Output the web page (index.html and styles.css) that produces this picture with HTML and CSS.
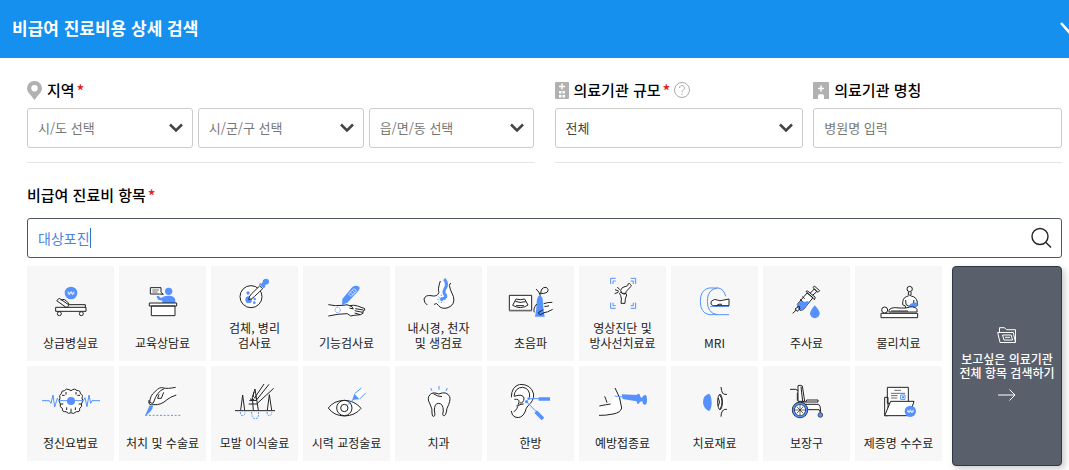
FILE: index.html
```html
<!DOCTYPE html>
<html lang="ko">
<head>
<meta charset="utf-8">
<meta name="viewport" content="width=device-width, initial-scale=1">
<title>비급여 진료비용 상세 검색</title>
<link rel="stylesheet" href="styles.css">
</head>
<body>
<header class="top">
  <h1 class="top-title">비급여 진료비용 상세 검색</h1>
  <button class="top-toggle" type="button" aria-label="접기">
    <svg width="20" height="14" viewBox="0 0 20 14"><path d="M2 2l8 9 8-9" fill="none" stroke="#fff" stroke-width="2.500"/></svg>
  </button>
</header>
<main class="content">
  <form class="filters">
    <section class="group">
      <div class="field">
        <div class="label-row">
          <svg width="15" height="19" viewBox="0 0 15 19"><path fill="#b1b1b1" fill-rule="evenodd" d="M7.500 0A7.300 7.300 0 0 0 0 7.300C0 11 3 13 7.500 19C12 13 15 11 15 7.300A7.300 7.300 0 0 0 7.500 0ZM7.500 4a3.200 3.200 0 1 1 0 6.400a3.200 3.200 0 0 1 0-6.400Z"/></svg>
          <label class="label" for="sido">지역</label><span class="star">*</span>
        </div>
        <div class="selects">
          <div class="select-box"><select id="sido" class="control muted"><option>시/도 선택</option></select><svg class="arrow" width="14" height="10" viewBox="0 0 14 10"><path d="M1 1.500l6 6 6-6"/></svg></div>
          <div class="select-box"><select class="control muted" aria-label="시/군/구"><option>시/군/구 선택</option></select><svg class="arrow" width="14" height="10" viewBox="0 0 14 10"><path d="M1 1.500l6 6 6-6"/></svg></div>
          <div class="select-box"><select class="control muted" aria-label="읍/면/동"><option>읍/면/동 선택</option></select><svg class="arrow" width="14" height="10" viewBox="0 0 14 10"><path d="M1 1.500l6 6 6-6"/></svg></div>
        </div>
      </div>
    </section>
    <section class="group group-wide">
      <div class="field">
        <div class="label-row">
          <svg width="14" height="17" viewBox="0 0 14 17"><rect width="14" height="17" rx="1" fill="#b1b1b1"/><path d="M7 1.500v6M4 4.500h6" stroke="#fff" stroke-width="1.500"/><path fill="#fff" d="M4 9h2.500v2.500H4zM7.500 9H10v2.500H7.500zM4 13h2.500v2.500H4zM7.500 13H10v2.500H7.500z"/></svg>
          <label class="label" for="size">의료기관 규모</label><span class="star">*</span>
          <button class="help" type="button" aria-label="도움말"><svg width="16" height="16" viewBox="0 0 16 16" fill="none" stroke="#aaa"><circle cx="8" cy="8" r="7.500"/><path d="M5.500 6a2.500 2.500 0 1 1 4.200 1.800C8.500 8.700 8 9 8 10.300M8 11.500v1.300"/></svg></button>
        </div>
        <div class="select-box"><select id="size" class="control"><option>전체</option></select><svg class="arrow" width="14" height="10" viewBox="0 0 14 10"><path d="M1 1.500l6 6 6-6"/></svg></div>
      </div>
      <div class="field">
        <div class="label-row">
          <svg width="16" height="17" viewBox="0 0 16 17"><path fill="#b1b1b1" d="M0 1a1 1 0 0 1 1-1h14a1 1 0 0 1 1 1v16h-5v-3q0-2-3-2t-3 2v3H0z"/><path d="M8 3.500v6M5 6.500h6" stroke="#fff" stroke-width="1.500"/></svg>
          <label class="label" for="name">의료기관 명칭</label>
        </div>
        <input id="name" class="control" type="text" placeholder="병원명 입력">
      </div>
    </section>
  </form>
  <div class="label-row item-label"><label class="label" for="item">비급여 진료비 항목</label><span class="star">*</span></div>
  <div class="search">
    <input id="item" class="search-input" type="text" value="대상포진"><span class="caret"></span>
    <button class="search-button" type="button" aria-label="검색"><svg width="22" height="22" viewBox="0 0 22 22" fill="none" stroke="#222" stroke-width="1.400"><circle cx="10" cy="9.500" r="8"/><path d="M16 15.500l5 5"/></svg></button>
  </div>
  <div class="items">
    <div class="tiles">
      <button class="tile" type="button">
        <svg class="icon" viewBox="60 72 183 132"><circle class="b" cx="153" cy="99" r="19"/><path class="w" d="M144 94l4 11 5-11 5 11 4-11M142 99h22"/><path class="k f" d="M107 142h91v12h-91z"/><path class="k" d="M110 122l8-7 29 20-5 7h-4zM122 120q12-6 22 8l4 6h48v8"/><circle class="k f" cx="118" cy="161" r="6"/><circle class="k f" cx="184" cy="161" r="6"/></svg>
        <span>상급병실료</span>
      </button>
      <button class="tile" type="button">
        <svg class="icon" viewBox="336 72 183 132"><circle class="b" cx="446" cy="94" r="11"/><path class="b" d="M427 129v-7l-12-3q-6-7-5-10l5-2 8 7q10-8 26-7 17 1 17 15v7z"/><path class="k f" d="M391 83h32v14l7 6-12-1h-27zM388 129h82v9h-82zM394 138h71v29h-71z"/><path class="k thin" d="M397 90h20M397 96h16"/></svg>
        <span>교육상담료</span>
      </button>
      <button class="tile" type="button">
        <svg class="icon" viewBox="57 27 183 132"><circle class="k f" cx="138" cy="110" r="33"/><circle class="b" cx="131" cy="119" r="10"/><circle class="b" cx="129" cy="99" r="5"/><circle class="b" cx="149" cy="117" r="4"/><circle class="b" cx="148" cy="128" r="4"/><path class="k f" d="M131 119q2-12 9-18l24-23 9 8-25 24q-8 8-17 9z"/><path class="b" d="M162 73l5-4 4 2 3-10q7-7 15-3 6 6 1 13l-10 5 1 4-5 5z"/></svg>
        <span>검체, 병리<br>검사료</span>
      </button>
      <button class="tile" type="button">
        <svg class="icon" viewBox="333 72 183 132"><path class="f" d="M370 134l44 2 20 1 24 1 21 8v14l-28 6-25-1-57 4z"/><path class="k" d="M370 134q20 5 44 2 14-4 20 1 12-3 24 1l21 8q2 6-5 7v7l-8 4-18 2q-12 6-21-5-27 0-57 7M451 146l24 4M449 152l24 5M449 159l17 5M434 137q8 1 11 10l-12-3"/><path class="b" d="M411 137l1-20 30-36q12-7 21 0 3 5-4 13l-32 34q-8 1-16 9z"/><path class="w" d="M430 102l16-15q9 0 8 7l-16 15zM436 97l9 7M442 91l8 7"/><circle class="bl" cx="398" cy="150" r="8" stroke-dasharray="3 2"/></svg>
        <span>기능검사료</span>
      </button>
      <button class="tile" type="button">
        <svg class="icon" viewBox="54 27 183 132"><path class="f" d="M148 64l-6 30-20 15 12 30 45 4 12-25-13-42z"/><path class="k" d="M151 63q-9 27-4 34-5 15-24 10-16-3-21 10 0 12 10 18M132 133q9-6 13 3 10 13 29 7 23-9 16-34-11-22-12-33l4-7"/><path class="b5" d="M163 57q12 15 2 29-7 14 2 20 3 8-14 12"/><path class="bl" d="M146 110l16 17M163 110l-18 16M154 104v25M142 118h25" stroke-dasharray="4 3"/></svg>
        <span>내시경, 천자<br>및 생검료</span>
      </button>
      <button class="tile" type="button">
        <svg class="icon" viewBox="330 72 183 132"><path class="k f" d="M358 106h67v45h-67z"/><path d="M357 153h69" stroke="#888" stroke-width="3"/><path class="k" d="M378 117q13 4 26 0l10 18q-22 15-46 1zM376 124q13 6 31 1M378 137h24"/><path class="f" d="M456 132l31-5 1 21-36 13z"/><path class="k" d="M438 87q10 8 13 20M452 103q0-22 16-21 11 6 3 15-9 5-20 3"/><path class="b" d="M435 170q5-24 5-44 2-20 10-20 9 3 9 24 1 22 5 40z"/><path class="k" d="M440 132q-12 16-7 25M488 148q-18 10-26 10l-10 6q-8-1-6-7l14-8M487 127q-15 0-26 4M463 139q8 1 14-2"/></svg>
        <span>초음파</span>
      </button>
      <button class="tile" type="button">
        <svg class="icon" viewBox="51 27 183 132"><path class="bl" d="M122 55h-15v17M167 55h15v17M122 145h-15v-17M167 145h15v-17M114 72v-9h8M175 72v-9h-8M114 128v9h8M175 128v9h-8"/><path class="k f" d="M144 82l14-5 2-6q5-2 6 2 5 2 1 7l-13 14-3 8q-7 1-11-3l-3-8q3-8 7-9zM137 106q-7-7 0-9 4 3 9 3 9-2 9 5-6 12-5 25h-12q3-14-1-24zM120 89l12 5M119 101l11-4M127 81l7 8"/></svg>
        <span>영상진단 및<br>방사선치료료</span>
      </button>
      <button class="tile" type="button">
        <svg class="icon" viewBox="327 72 183 132"><path class="bl" d="M462 164h-60q-26-5-26-40t26-40h28q17 3 22 25"/><path class="bl" d="M462 139h-56M427 84q-30 4-30 40t30 40"/><path class="k f" d="M462 137h-46q-11-2-7-13 9-9 18-4 8 4 15 1l20-4z"/><path class="k" d="M424 137q8-7 17-4"/></svg>
        <span>MRI</span>
      </button>
      <button class="tile" type="button">
        <svg class="icon" viewBox="48 72 183 132"><path class="k f" d="M112 133l29-34 18 14-29 36-10 2q-9-7-8-18z"/><path class="b" d="M116 128l9-7q8 8 16 2l8 3-19 23-11 2q-9-7-8-18z"/><path class="k" d="M98 160l11-10M105 147l12-9 3 9-9 7zM138 94l5-1 23 19-3 7zM151 99l12-12 7 8-12 11M159 83l4-5 16 14-5 5zM127 110l7 6M120 118l7 6"/><path class="b" d="M164 136q-14 18-14 24a14 14 0 0 0 29 0q0-8-15-24z"/></svg>
        <span>주사료</span>
      </button>
      <button class="tile" type="button">
        <svg class="icon" viewBox="321 72 183 132"><path class="k f" d="M435 148l-2-10-8-4q-1-20 11-24 7-2 10-5 4 4 11 5 13 5 13 26l-8 5-7 9zM434 120l1 14 8 4M459 120l-2 12"/><path class="k" d="M442 96v9M450 96v9"/><circle class="k f" cx="446" cy="87" r="8"/><path class="b" d="M439 143q8-16 31-16v9l-11 10z"/><path class="k f" d="M360 160h110v13H360zM384 156q-2-12 17-13 23 2 34 1 25-9 33 4v8zM390 153h51"/><circle class="k f" cx="371" cy="150" r="9"/></svg>
        <span>물리치료</span>
      </button>

      <button class="tile" type="button">
        <svg class="icon" viewBox="60 66 183 132"><path class="k f" d="M147 83q-8-5-14 3-9-1-9 9-8 5-4 13-5 10 1 18-3 10 6 13-1 12 11 10 8 9 15 3 8 6 16-3 12 2 10-10 9-5 5-13 8-8 2-18 4-10-5-13 0-11-10-9-7-8-13-3"/><path class="k" d="M147 83l6 3 5-3M138 90v8M168 90v8M126 100h8M180 100h-8M122 126h8M184 126h-8M140 144v-8M166 144v-8M153 150v-10"/><circle class="b" cx="153" cy="117" r="12"/><path class="bl" d="M66 116h22l5 8 6-25 5 36 8-26 4 7h74l5-9 6 27 6-35 5 25 4-8h24"/></svg>
        <span>정신요법료</span>
      </button>
      <button class="tile" type="button">
        <svg class="icon" viewBox="336 66 183 132"><path class="f" d="M470 75l-38 2-22 1-20 22 1 26 37-8 44-19z"/><path class="k" d="M467 76q-25 5-36 2-12-5-26 11-16 12-16 35M469 99q-17 5-28 14-18 17-39 15-19 4-15-14M433 80q-22 7-33 43-7 4-10-4M431 91l-7 18h-11l4-12"/><path class="b" d="M389 130l10 2q-2 18-24 29z"/><path class="bl" d="M376 160h105" stroke-dasharray="6 5"/></svg>
        <span>처치 및 수술료</span>
      </button>
      <button class="tile" type="button">
        <svg class="icon" viewBox="57 66 183 132"><path class="k f" d="M107 145l6-46 6 46M187 145l6-47 7 47M145 145l-3-39 8-25 10 64M133 116l20-1M131 126h26"/><path class="k" d="M90 146h120M177 66l-29 43M192 67l-40 50M206 79l-49 45M147 90q-6 17 5 18M135 111l12 2"/><path class="bl" d="M106 150q0 11 7 11t7-11M140 150q-1 20 11 20t9-20M186 150q0 11 7 11t7-11" stroke-dasharray="6 3"/></svg>
        <span>모발 이식술료</span>
      </button>
      <button class="tile" type="button">
        <svg class="icon" viewBox="333 66 183 132"><path class="k f" d="M370 138q16-22 48-23 32 1 50 24-17 22-50 23-32-1-48-24z"/><circle class="k" cx="418" cy="138" r="23"/><circle class="k" cx="418" cy="138" r="11"/><path class="f" d="M449 95l20-17 13 15-18 18z"/><path class="bl" d="M429 128l17-17M449 95l20-17M464 111l18-18"/><path class="b" d="M442 113l6-18 15 17z"/></svg>
        <span>시력 교정술료</span>
      </button>
      <button class="tile" type="button">
        <svg class="icon" viewBox="54 66 183 132"><path class="k f" d="M146 96q-17-7-25 1-12 11-1 29 8 16 6 27 1 15 8 8 2-5-1-14 0-23 12-23 15 0 15 23-4 12 0 14 8 3 11-22 12-24 8-35-9-18-33-8zM130 95q13 9 26 9"/><path class="bl" d="M147 72v11M122 78l4 9M172 78l-4 9"/></svg>
        <span>치과</span>
      </button>
      <button class="tile" type="button">
        <svg class="icon" viewBox="330 66 183 132"><path class="f" d="M365 105q5-34 34-35 29 3 31 35-6 18-15 30l-16 28q-20 11-34-12z"/><path class="k" d="M364 106q0-32 25-39 34-1 42 29 1 21-17 35-7 9-9 19-10 22-30 15-10-4-11-18M372 103q3-27 26-27 23 3 21 31M373 103q25-9 29 5 0 16-13 15M373 112q16-2 14 9-1 7-8 12M401 126q-18 0-20 13-4 8-10 10"/><path class="bl" d="M416 110h31M409 119l30 30"/><circle class="b" cx="416" cy="110" r="4"/><circle class="b" cx="410" cy="119" r="5"/><path d="M446 111h34M437 149l22 22" fill="none" stroke="#5591ff" stroke-width="11"/></svg>
        <span>한방</span>
      </button>
      <button class="tile" type="button">
        <svg class="icon" viewBox="51 66 183 132"><path class="f" d="M121 80l20 59q-3 16-69 22v-29l31-9 15-15z"/><path class="k" d="M120 78q17 27 20 60-3 14-26 18-24 5-42 4M73 132q19-4 34-6M89 103q4 9 7 19"/><path class="bl" d="M119 102l23 3"/><path class="b" d="M140 97l46 2 2-4 6 2 3 9 4 1q2-8 10-8 5 0 5 15t-7 14q-6 0-7-10l-7 1q-2 7-8 7l-2-8-42-7z"/></svg>
        <span>예방접종료</span>
      </button>
      <button class="tile" type="button">
        <svg class="icon" viewBox="327 66 183 132"><path class="b" d="M402 95q-19 5-18 27 3 19 18 25 7-4 8-25-1-24-8-27z"/><path class="f" d="M438 96h18v48h-18z"/><path class="k" d="M438 75q1 12 5 19 7 5 13 3M438 164q0-12 5-18 6-6 13-4"/><ellipse class="k f" cx="435" cy="120" rx="7" ry="23"/><path class="k" d="M434 98q14 21 1 44M430 108q7 12 0 24"/></svg>
        <span>치료재료</span>
      </button>
      <button class="tile" type="button">
        <svg class="icon" viewBox="48 372 183 132"><path class="k f" d="M114 377q6-3 13 1l7 46h-20zM123 426h51v-6h-34l-3 6M125 433h51q6 4 6 22"/><path class="k" d="M123 380l5 45M90 388h17l8 4M112 398v24M144 449h33l5 10"/><circle cx="120" cy="450" r="20" fill="#fff" stroke="#222" stroke-width="9"/><circle cx="120" cy="450" r="20" fill="none" stroke="#5591ff" stroke-width="5"/><path class="k thin" d="M120 435v30M105 450h30M110 440l20 20M130 440l-20 20"/><circle cx="181" cy="465" r="7" fill="#5591ff" stroke="#222" stroke-width="2"/></svg>
        <span>보장구</span>
      </button>
      <button class="tile" type="button">
        <svg class="icon" viewBox="321 372 183 132"><path class="k f" d="M371 467v-55h10v55zM379 382h63v48h-63z"/><path class="k thin" d="M400 391h20M390 400h42M390 407h20M390 414h19"/><path class="bl f" d="M419 405h13v13h-13z"/><path class="b" d="M423 409h6v6h-6z"/><path class="k f" d="M371 467l18-43h70l-14 43z"/><circle class="b" cx="448" cy="454" r="17"/><path class="w" d="M440 449l4 10 4-10 5 10 4-10M438 454h21"/></svg>
        <span>제증명 수수료</span>
      </button>
    </div>
    <button class="all" type="button">
      <svg width="20" height="16" viewBox="0 0 20 16" fill="none" stroke="#fff"><path d="M3 15.500L.7 5.500h15.600l2.200 10zM2.500 5V.7h5l2 2h9V15M5.500 8h8.700l1.300 5H7zM8 10.300h5"/></svg>
      <span class="all-text">보고싶은 의료기관<br>전체 항목 검색하기</span>
      <svg width="18" height="12" viewBox="0 0 18 12" fill="none" stroke="#fff"><path d="M0 6h17M11.500.5L17 6l-5.500 5.500"/></svg>
    </button>
  </div>
</main>
</body>
</html>
```

FILE: styles.css
```css
* { box-sizing: border-box; }

body {
  margin: 0;
  background: #fff;
  color: #111;
  font-family: "Noto Sans CJK KR", sans-serif;
  font-size: 13px;
}

button, input, select { font: inherit; color: inherit; }
svg { display: block; flex: none; }

.top {
  display: flex;
  align-items: center;
  justify-content: space-between;
  height: 58px;
  padding: 0 0 2px 12px;
  overflow: hidden;
  background: #1590ef;
  color: #fff;
}
.top-title { margin: 0; font-size: 17px; font-weight: 700; line-height: 24px; }
.top-toggle { margin-right: -10px; padding: 0; border: 0; background: none; }

.content { padding: 22px 7px 4px 27px; }

.filters { display: flex; gap: 20px; }
.group { flex: 1 1 0; padding-bottom: 14px; border-bottom: 1px solid #e5e5e5; }
.group-wide { display: flex; gap: 10px; }
.field { flex: 1 1 0; min-width: 0; }

.label-row { display: flex; align-items: center; height: 20px; margin-bottom: 8px; }
.label-row svg + .label { margin-left: 5px; }
.label { font-size: 15px; font-weight: 500; line-height: 20px; white-space: nowrap; color: #000; }
.star { margin-left: 2px; font-size: 16px; font-weight: 500; line-height: 20px; color: #e21b1b; }
.help { margin-left: 4px; padding: 0; border: 0; background: none; }

.selects { display: flex; gap: 5px; }
.select-box { position: relative; flex: 1 1 0; min-width: 0; }
.control {
  display: block;
  width: 100%;
  height: 40px;
  padding: 0 10px 2px;
  border: 1px solid #ccc;
  border-radius: 3px;
  background: #fff;
  color: #444;
  appearance: none;
}
.muted, .control::placeholder { color: #777; opacity: 1; }
.arrow {
  position: absolute;
  top: 15px;
  right: 10px;
  pointer-events: none;
  fill: none;
  stroke: #444;
  stroke-width: 2.5;
}

.item-label { margin: 22px 0 13px; }

.search {
  position: relative;
  display: flex;
  align-items: center;
  height: 40px;
  padding: 0 9px 0 10px;
  border: 1px solid #4f5661;
  border-radius: 3px;
}
.search-input {
  flex: 1;
  min-width: 0;
  padding: 0;
  border: 0;
  outline: 0;
  background: none;
  font-size: 14px;
  color: #4b84df;
}
.caret { position: absolute; left: 62px; top: 9px; width: 1px; height: 20px; background: #2f73d2; }
.search-button { padding: 0; border: 0; background: none; }

.items { display: flex; align-items: flex-start; gap: 10px; margin-top: 8px; }
.tiles { flex: 1; display: grid; grid-template-columns: repeat(10, minmax(0, 1fr)); gap: 5px; }
.tile {
  display: flex;
  flex-direction: column;
  align-items: center;
  justify-content: flex-end;
  gap: 7px;
  min-height: 95px;
  padding: 0 0 11px;
  border: 0;
  background: #f7f7f7;
  color: #222;
  font-size: 12px;
  line-height: 15px;
  white-space: nowrap;
}
.icon { width: 61px; height: 44px; }
.icon .k { fill: none; stroke: #222; stroke-width: 3; }
.icon .f { fill: #fff; }
.icon .thin { stroke-width: 2; }
.icon .b { fill: #5591ff; }
.icon .bl { fill: none; stroke: #5591ff; stroke-width: 3; }
.icon .bl.f, .icon .k.f { fill: #fff; }
.icon .b5 { fill: none; stroke: #5591ff; stroke-width: 9; }
.icon .w { fill: none; stroke: #fff; stroke-width: 2; }

.all {
  display: flex;
  flex-direction: column;
  align-items: center;
  justify-content: center;
  gap: 9px;
  width: 110px;
  min-height: 200px;
  padding: 0 0 4px;
  border: 1px solid #2f3946;
  border-radius: 4px;
  background: #59606c;
  box-shadow: 3px 3px 6px rgba(0, 0, 0, 0.2);
  color: #fff;
}
.all-text { font-size: 12px; font-weight: 500; line-height: 14px; white-space: nowrap; }
```
